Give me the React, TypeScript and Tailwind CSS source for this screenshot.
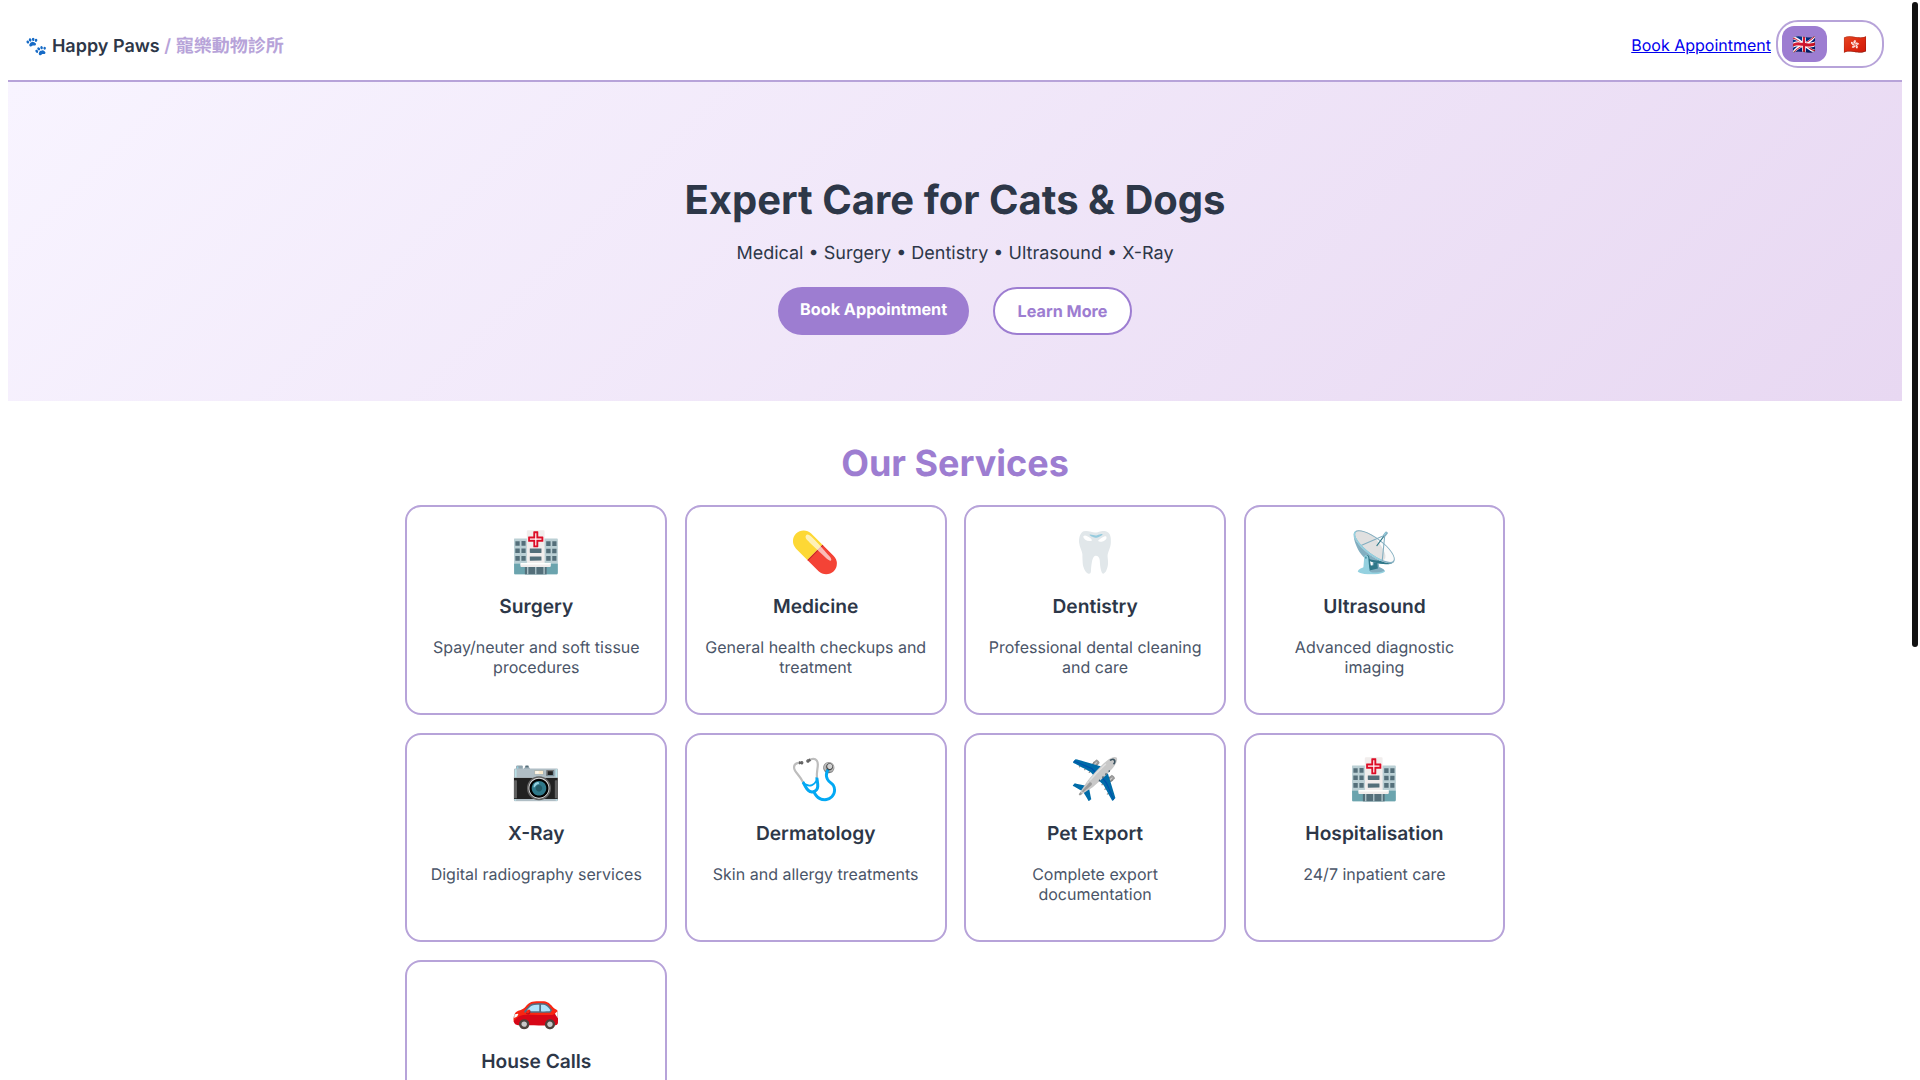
const services = [
  { icon: "🏥", title: "Surgery", desc: "Spay/neuter and soft tissue procedures" },
  { icon: "💊", title: "Medicine", desc: "General health checkups and treatment" },
  { icon: "🦷", title: "Dentistry", desc: "Professional dental cleaning and care" },
  { icon: "📡", title: "Ultrasound", desc: "Advanced diagnostic imaging" },
  { icon: "📷", title: "X-Ray", desc: "Digital radiography services" },
  { icon: "🩺", title: "Dermatology", desc: "Skin and allergy treatments" },
  { icon: "✈️", title: "Pet Export", desc: "Complete export documentation" },
  { icon: "🏥", title: "Hospitalisation", desc: "24/7 inpatient care" },
  { icon: "🚗", title: "House Calls", desc: "Home visits for your pets" },
];

export default function App() {
  return (
    <div
      className="min-h-screen bg-white pb-10 pl-2 pr-[18px] text-[#2d3748] [text-rendering:geometricPrecision]"
      style={{ fontFamily: "Inter, 'Noto Sans CJK TC', 'Noto Color Emoji', sans-serif" }}
    >
      <div className="fixed right-[2px] top-[2px] h-[645px] w-[6px] rounded-[3px] bg-[#111111]" />
      <header className="flex h-[82px] items-center justify-between border-b-2 border-[#b7a3d9] pl-[17px] pr-[18px] pt-[12px]">
        <div className="mt-[2px] text-lg font-semibold">
          🐾 Happy Paws <span className="text-[#b7a3d9]">/ 寵樂動物診所</span>
        </div>
        <div className="flex items-center gap-[5px]">
          <a href="#" className="-mt-[2px] text-base text-[#0000ee] underline">Book Appointment</a>
          <div className="-mt-[4px] flex h-[48px] w-[108px] items-center gap-[6px] rounded-[22px] border-2 border-[#b7a3d9] p-1">
            <span className="flex h-[36px] w-[45px] items-center justify-center rounded-[12px] bg-[#9d7dd1] text-[19.2px]">🇬🇧</span>
            <span className="flex h-[36px] w-[45px] items-center justify-center rounded-[12px] text-[19.2px]">🇭🇰</span>
          </div>
        </div>
      </header>

      <section className="flex h-[319px] flex-col items-center bg-[linear-gradient(135deg,#f8f4ff,#e8d8f2)] pt-[94px]">
        <h1 className="text-[40px] font-bold leading-[48px]">Expert Care for Cats &amp; Dogs</h1>
        <p className="mt-[16px] text-lg leading-[28px]">Medical • Surgery • Dentistry • Ultrasound • X-Ray</p>
        <div className="mt-[19px] flex gap-6">
          <a className="rounded-[24px] bg-[#9d7dd1] px-[22px] py-[12px] text-[16.2px] font-bold leading-[20px] text-white">Book Appointment</a>
          <a className="rounded-[24px] border-2 border-[#9d7dd1] bg-white px-[22.5px] py-[12px] text-[16.2px] font-bold leading-[20px] text-[#9d7dd1]">Learn More</a>
        </div>
      </section>

      <section className="mx-auto mt-[38px] max-w-[1100px]">
        <h2 className="text-center text-[36px] font-bold leading-[48px] text-[#9d7dd1]">Our Services</h2>
        <div className="ml-[0.4px] mt-[18px] grid w-[1100px] grid-cols-4 gap-x-[17.6px] gap-y-[18.1px]">
          {services.map((s, i) => (
            <div key={i} className="h-[209.5px] rounded-[16px] border-2 border-[#b7a3d9] bg-white px-[18px] pt-[20.5px] text-center">
              <div className="text-[40px] leading-[48px]">{s.icon}</div>
              <h3 className="mt-[16px] text-[19.2px] font-semibold leading-[28px]">{s.title}</h3>
              <p className="mt-[17px] text-base leading-[20px] text-[#4a5568]">{s.desc}</p>
            </div>
          ))}
        </div>
      </section>
      <div className="h-[560px]" />
    </div>
  );
}
